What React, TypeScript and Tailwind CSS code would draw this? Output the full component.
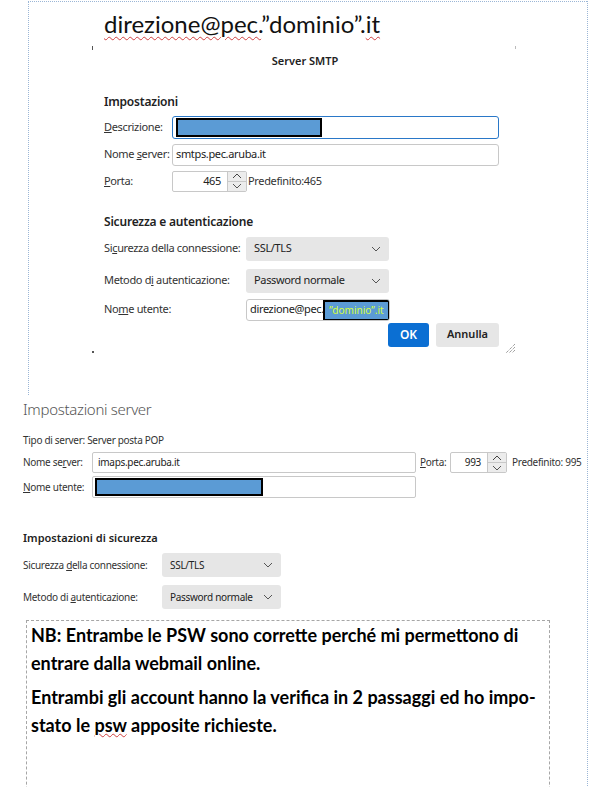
import React from "react";

const dlg = { fontFamily: '"Noto Sans", "Open Sans", sans-serif' };
const cal = { fontFamily: 'Lato, "Liberation Sans", sans-serif' };

function Chevron({ className = "" }: { className?: string }) {
  return (
    <svg width="10" height="6" viewBox="0 0 10 6" className={className}>
      <path d="M1 1 L5 5 L9 1" fill="none" stroke="#555" strokeWidth="1" />
    </svg>
  );
}

function Spin({ value, w }: { value: string; w: string }) {
  return (
    <div className={`flex h-[21px] ${w} border border-[#c8c8c8] rounded-[2px] bg-white shrink-0`}>
      <div className="flex-1 flex items-center justify-end pr-[6px] text-[#222]">{value}</div>
      <div className="w-[19px] flex flex-col bg-[#ececec] border-l border-[#c8c8c8]">
        <div className="flex-1 flex items-center justify-center border-b border-[#c8c8c8]">
          <svg width="10" height="6" viewBox="0 0 10 6"><path d="M1 5 L5 1 L9 5" fill="none" stroke="#444" strokeWidth="1" /></svg>
        </div>
        <div className="flex-1 flex items-center justify-center">
          <Chevron />
        </div>
      </div>
    </div>
  );
}

function Select({ value, w }: { value: string; w: string }) {
  return (
    <div className={`flex items-center justify-between h-[24px] ${w} bg-[#e6e6e6] rounded-[3px] pl-[8px] pr-[8px] text-[#222] shrink-0 whitespace-nowrap`}>
      <span>{value}</span>
      <Chevron />
    </div>
  );
}

export default function App() {
  return (
    <div className="w-[592px] h-[787px] bg-white overflow-hidden">
      <div className="w-[588px] h-[787px] border-r border-dotted border-[#9bb6d6]">
        {/* top section */}
        <div className="ml-[28px] mt-[1px] h-[394px] border-l border-t border-dotted border-[#9bb6d6]">
          <div className="pl-[75px] pt-[6px] text-[24px] leading-[32px] text-[#111]" style={cal}>
            <span className="underline decoration-wavy decoration-[#d04040] decoration-1 underline-offset-[3px]">direzione@pec.</span>
            ”dominio”.<span className="underline decoration-wavy decoration-[#d04040] decoration-1 underline-offset-[3px]">it</span>
          </div>
          {/* dialog */}
          <div className="ml-[63px] mt-[6px] w-[424px] h-[312px] relative text-[11px] tracking-[-0.35px] whitespace-nowrap" style={dlg}>
            <div className="absolute left-0 top-0 w-[1px] h-[4px] bg-[#555]" />
            <div className="absolute right-0 top-0 w-[1px] h-[3px] bg-[#bbb]" />
            <div className="absolute left-0 bottom-[5px] w-[2px] h-[2px] bg-[#555]" />
            <div className="text-center text-[11px] tracking-normal font-semibold text-[#222] pt-[7px] pl-[2px]">Server SMTP</div>
            <div className="pl-[12px] pr-[17px]">
              <div className="mt-[24px] text-[12px] tracking-[-0.2px] font-semibold text-[#222] leading-[16px]">Impostazioni</div>
              <div className="mt-[6px] flex items-center h-[23px]">
                <div className="w-[68px] text-[#333]"><u>D</u>escrizione:</div>
                <div className="flex-1 h-[23px] border-[1.5px] border-[#2a78c8] rounded-[3px] flex items-center pl-[3px]">
                  <div className="w-[146px] h-[19px] bg-[#5b9bd5] border-[2px] border-black" />
                </div>
              </div>
              <div className="mt-[5px] flex items-center h-[22px]">
                <div className="w-[68px] text-[#333]">Nome <u>s</u>erver:</div>
                <div className="flex-1 h-[22px] border border-[#c8c8c8] rounded-[3px] flex items-center pl-[3px] text-[#222]">smtps.pec.aruba.it</div>
              </div>
              <div className="mt-[5px] flex items-center h-[21px]">
                <div className="w-[68px] text-[#333]"><u>P</u>orta:</div>
                <Spin value="465" w="w-[75px]" />
                <div className="ml-[1px] text-[#333]">Predefinito:465</div>
              </div>
              <div className="mt-[22px] text-[12px] tracking-[-0.2px] font-semibold text-[#222] leading-[16px]">Sicurezza e autenticazione</div>
              <div className="mt-[7px] flex items-center">
                <div className="w-[142px] text-[#333]">Si<u>c</u>urezza della connessione:</div>
                <Select value="SSL/TLS" w="w-[143px]" />
              </div>
              <div className="mt-[8px] flex items-center">
                <div className="w-[142px] text-[#333]">Metodo d<u>i</u> autenticazione:</div>
                <Select value="Password normale" w="w-[143px]" />
              </div>
              <div className="mt-[6px] flex items-start">
                <div className="w-[142px] text-[#333] pt-[2px]">No<u>m</u>e utente:</div>
                <div className="w-[144px] h-[22px] border border-[#c8c8c8] rounded-[3px] flex items-center pl-[3px] text-[#222] relative overflow-hidden">
                  <span>direzione@pec.</span>
                  <div className="absolute left-[76px] top-[0px] w-[67px] h-[21px] bg-[#5b9bd5] border-[2px] border-black flex items-center justify-center text-[10px] tracking-normal text-[#d6ff3c]">”dominio”.it</div>
                </div>
              </div>
              <div className="flex justify-end gap-[7px] mt-[2px]">
                <div className="w-[41px] h-[24px] bg-[#0b6fd3] rounded-[3px] text-white font-semibold flex items-center justify-center text-[12px] tracking-normal">OK</div>
                <div className="w-[63px] h-[24px] bg-[#e6e6e6] rounded-[3px] text-[#222] font-semibold flex items-center justify-center text-[11px] tracking-normal">Annulla</div>
              </div>
            </div>
            <svg className="absolute right-[0px] bottom-[4px]" width="11" height="11" viewBox="0 0 11 11">
              <path d="M10 1 L1 10 M10 4 L4 10 M10 7 L7 10" stroke="#777" strokeWidth="1" strokeDasharray="1 1" />
            </svg>
          </div>
        </div>

        {/* second section */}
        <div className="pl-[23px] text-[10px] tracking-[-0.3px] text-[#333] whitespace-nowrap" style={dlg}>
          <div className="mt-[4px] text-[15px] tracking-[-0.3px] font-light text-[#555] leading-[20px]">Impostazioni server</div>
          <div className="mt-[14px] leading-[14px]">Tipo di server: Server posta POP</div>
          <div className="mt-[5px] flex items-center h-[21px]">
            <div className="w-[69px]">Nome se<u>r</u>ver:</div>
            <div className="w-[324px] h-[21px] border border-[#c8c8c8] rounded-[2px] flex items-center pl-[5px] text-[#222]">imaps.pec.aruba.it</div>
            <div className="ml-[4px] w-[30px]"><u>P</u>orta:</div>
            <Spin value="993" w="w-[57px]" />
            <div className="ml-[5px]">Predefinito: 995</div>
          </div>
          <div className="mt-[3px] flex items-center h-[22px]">
            <div className="w-[69px]"><u>N</u>ome utente:</div>
            <div className="w-[324px] h-[22px] border border-[#c8c8c8] rounded-[2px] flex items-center pl-[2px]">
              <div className="w-[168px] h-[18px] bg-[#5b9bd5] border-[2px] border-black" />
            </div>
          </div>
          <div className="mt-[32px] text-[11px] tracking-normal font-semibold text-[#222] leading-[16px]">Impostazioni di sicurezza</div>
          <div className="mt-[7px] flex items-center">
            <div className="w-[139px]">Sicurezza <u>d</u>ella connessione:</div>
            <Select value="SSL/TLS" w="w-[119px]" />
          </div>
          <div className="mt-[8px] flex items-center">
            <div className="w-[139px]">Metodo di <u>a</u>utenticazione:</div>
            <Select value="Password normale" w="w-[119px]" />
          </div>
        </div>

        {/* note box */}
        <div className="ml-[26px] mt-[11px] w-[524px] h-[200px] border-t border-l border-r border-dashed border-[#a6a6a6] pl-[4px] text-[18px] font-bold text-black leading-[28px] whitespace-nowrap" style={cal}>
          <p>NB: Entrambe le PSW sono corrette perché mi permettono di</p>
          <p>entrare dalla webmail online.</p>
          <p className="mt-[6px]">Entrambi gli account hanno la verifica in 2 passaggi ed ho impo-</p>
          <p>stato le <span className="underline decoration-wavy decoration-[#d04040] decoration-1">psw</span> apposite richieste.</p>
        </div>
      </div>
    </div>
  );
}
